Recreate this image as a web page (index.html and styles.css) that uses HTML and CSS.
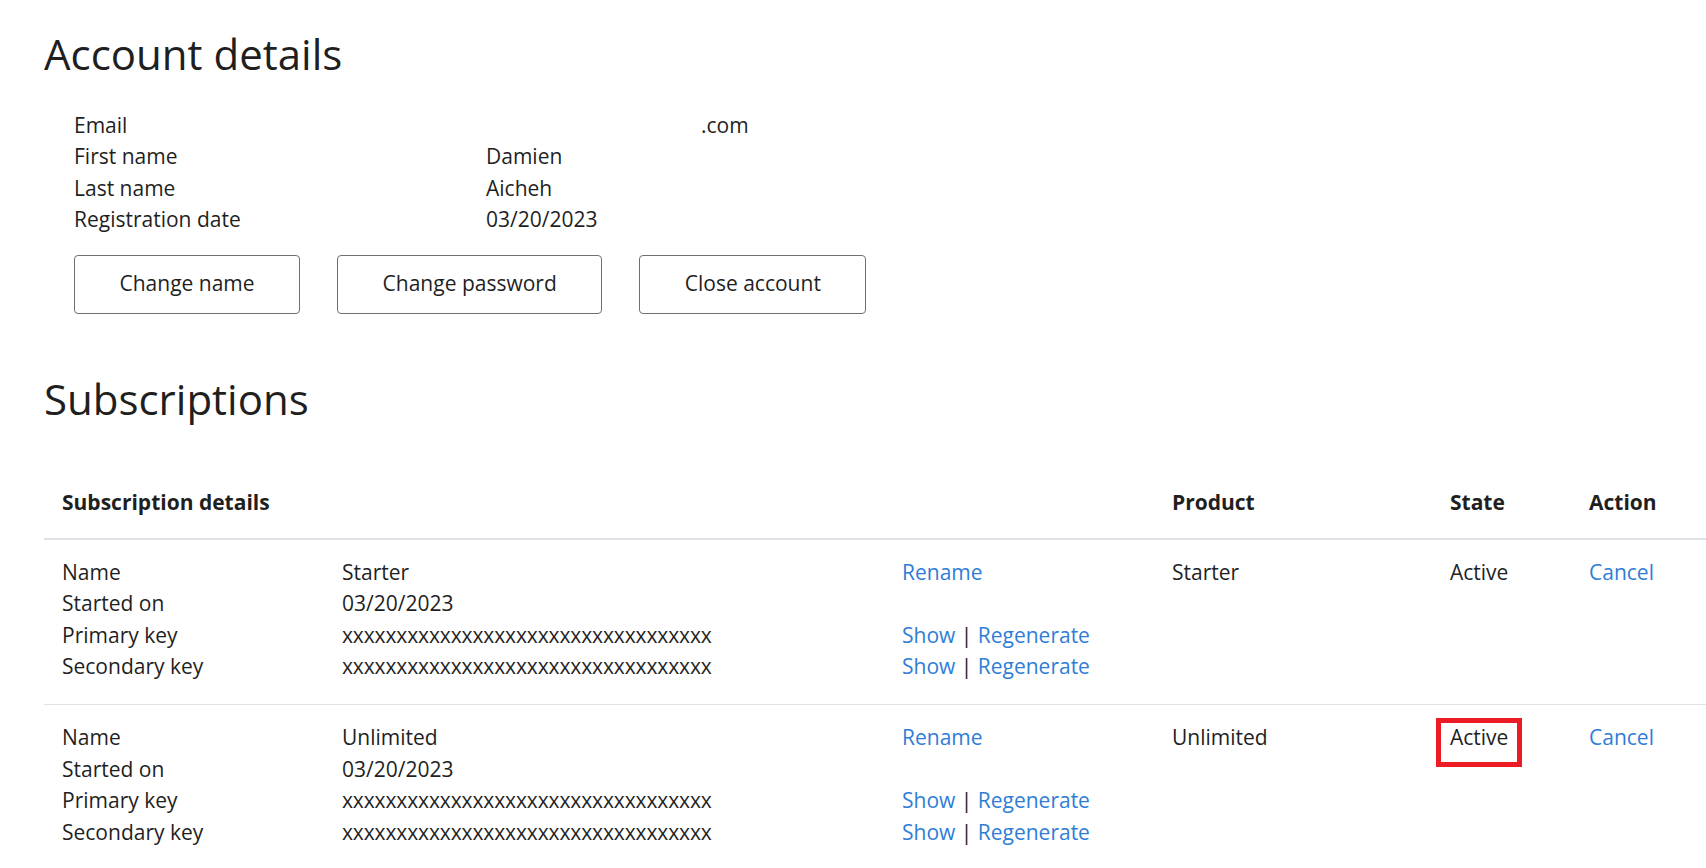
FILE: index.html
```html
<!DOCTYPE html>
<html lang="en">
<head>
<meta charset="utf-8">
<title>Account details</title>
<link rel="stylesheet" href="styles.css">
</head>
<body>
<main class="page">
  <h1 class="title">Account details</h1>
  <div class="details">
    <div class="label">Email</div><div class="value"><span class="redacted"></span>.com</div>
    <div class="label">First name</div><div class="value">Damien</div>
    <div class="label">Last name</div><div class="value">Aicheh</div>
    <div class="label">Registration date</div><div class="value">03/20/2023</div>
  </div>
  <div class="actions">
    <button class="btn">Change name</button>
    <button class="btn">Change password</button>
    <button class="btn">Close account</button>
  </div>

  <h1 class="title title-subs">Subscriptions</h1>
  <div class="subs">
    <div class="subs-row subs-head">
      <div class="cell">Subscription details</div>
      <div class="cell">Product</div>
      <div class="cell">State</div>
      <div class="cell">Action</div>
    </div>

    <div class="subs-row">
      <div class="cell">
        <div class="info">
          <div>Name</div><div>Starter</div><div><a class="link" href="#">Rename</a></div>
          <div>Started on</div><div>03/20/2023</div><div></div>
          <div>Primary key</div><div class="key">xxxxxxxxxxxxxxxxxxxxxxxxxxxxxxxxxx</div><div><a class="link" href="#">Show</a> | <a class="link" href="#">Regenerate</a></div>
          <div>Secondary key</div><div class="key">xxxxxxxxxxxxxxxxxxxxxxxxxxxxxxxxxx</div><div><a class="link" href="#">Show</a> | <a class="link" href="#">Regenerate</a></div>
        </div>
      </div>
      <div class="cell">Starter</div>
      <div class="cell">Active</div>
      <div class="cell"><a class="link" href="#">Cancel</a></div>
    </div>

    <div class="subs-row">
      <div class="cell">
        <div class="info">
          <div>Name</div><div>Unlimited</div><div><a class="link" href="#">Rename</a></div>
          <div>Started on</div><div>03/20/2023</div><div></div>
          <div>Primary key</div><div class="key">xxxxxxxxxxxxxxxxxxxxxxxxxxxxxxxxxx</div><div><a class="link" href="#">Show</a> | <a class="link" href="#">Regenerate</a></div>
          <div>Secondary key</div><div class="key">xxxxxxxxxxxxxxxxxxxxxxxxxxxxxxxxxx</div><div><a class="link" href="#">Show</a> | <a class="link" href="#">Regenerate</a></div>
        </div>
      </div>
      <div class="cell">Unlimited</div>
      <div class="cell"><span class="highlight">Active</span></div>
      <div class="cell"><a class="link" href="#">Cancel</a></div>
    </div>
  </div>
</main>
</body>
</html>
```

FILE: styles.css
```css
html, body {
  margin: 0;
  padding: 0;
  background: #ffffff;
}

body {
  font-family: "Open Sans", "Liberation Sans", sans-serif;
  font-size: 21px;
  line-height: 31.5px;
  color: #1f1f1f;
  overflow: hidden;
}

.page {
  padding: 29px 0 0 44px;
}

.title {
  margin: 0;
  font-size: 42px;
  line-height: 50px;
  font-weight: 400;
  color: #1f1f1f;
}

.details {
  margin: 30.5px 0 0 30px;
  display: grid;
  grid-template-columns: 412px auto;
}

.redacted {
  display: inline-block;
  width: 215px;
}

.actions {
  margin: 19px 0 0 30px;
  display: flex;
  gap: 37px;
}

.btn {
  font-family: inherit;
  font-size: 21px;
  line-height: 31.5px;
  color: #1f1f1f;
  background: #ffffff;
  border: 1px solid #707070;
  border-radius: 4px;
  padding: 12.75px 44.5px;
  margin: 0;
}

.title-subs {
  margin-top: 60px;
}

.subs {
  margin-top: 46.5px;
}

.subs-row {
  display: grid;
  grid-template-columns: 1110px 278px 139px 1fr;
  padding: 17px 0 21.5px;
  border-top: 1px solid #e3e3e3;
}

.subs-head {
  border-top: 0;
  font-weight: 700;
  padding: 17px 0 19px;
  border-bottom: 2px solid #dee2e6;
}

.subs-head + .subs-row {
  border-top: 0;
}

.cell {
  padding-left: 18px;
}

.info {
  display: grid;
  grid-template-columns: 280px 560px auto;
}

.key {
  letter-spacing: -0.12px;
}

.link {
  color: #2f7dd6;
  text-decoration: none;
}

.highlight {
  position: relative;
  display: inline-block;
}

.highlight::after {
  content: "";
  position: absolute;
  left: -14px;
  right: -14px;
  top: -4px;
  bottom: -13.5px;
  border: 5px solid #ed1c24;
}
```
